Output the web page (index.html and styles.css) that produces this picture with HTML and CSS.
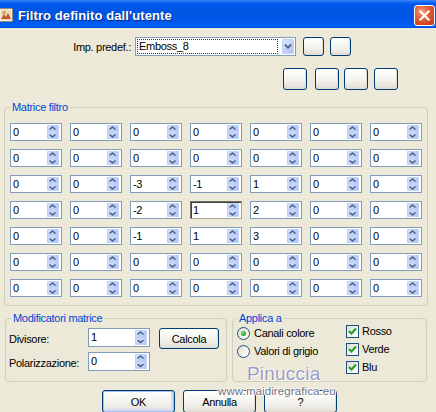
FILE: index.html
```html
<!DOCTYPE html>
<html>
<head>
<meta charset="utf-8">
<title>Filtro definito dall'utente</title>
<link rel="stylesheet" href="styles.css">
</head>
<body>
<div class="window">
  <div class="titlebar">
    <svg class="appicon" viewBox="0 0 16 16" width="16" height="16">
      <rect x="1.5" y="1.5" width="13" height="13" rx="1" fill="#F4EBD6" stroke="#9A8A6A"/>
      <rect x="3" y="3" width="10" height="10" fill="#E9D9B8"/>
      <path d="M3 12 L6 7 L8 10 L10 6 L13 12 Z" fill="#C4562E"/>
      <circle cx="6" cy="5.5" r="1.5" fill="#E88A4A"/>
    </svg>
    <span class="title">Filtro definito dall'utente</span>
    <span class="close">
      <svg viewBox="0 0 19 19" width="19" height="19">
        <path d="M5.5 5.5 L13.5 13.5 M13.5 5.5 L5.5 13.5" stroke="#fff" stroke-width="2.2" stroke-linecap="square"/>
      </svg>
    </span>
  </div>

  <div class="content">
    <div class="preset-row">
      <span class="preset-label">Imp. predef.:</span>
      <div class="combo">
        <span class="combo-text">Emboss_8</span>
        <span class="combo-btn"></span>
      </div>
      <span class="xpbtn sq"></span>
      <span class="xpbtn sq"></span>
    </div>

    <div class="tool-row">
      <span class="xpbtn tool"></span>
      <span class="xpbtn tool"></span>
      <span class="xpbtn tool"></span>
      <span class="xpbtn tool"></span>
    </div>

    <fieldset class="group matrix">
      <legend>Matrice filtro</legend>
      <div class="grid">
        <div class="spin"><span class="v">0</span><span class="arr"><i class="u"></i><i class="d"></i></span></div>
        <div class="spin"><span class="v">0</span><span class="arr"><i class="u"></i><i class="d"></i></span></div>
        <div class="spin"><span class="v">0</span><span class="arr"><i class="u"></i><i class="d"></i></span></div>
        <div class="spin"><span class="v">0</span><span class="arr"><i class="u"></i><i class="d"></i></span></div>
        <div class="spin"><span class="v">0</span><span class="arr"><i class="u"></i><i class="d"></i></span></div>
        <div class="spin"><span class="v">0</span><span class="arr"><i class="u"></i><i class="d"></i></span></div>
        <div class="spin"><span class="v">0</span><span class="arr"><i class="u"></i><i class="d"></i></span></div>

        <div class="spin"><span class="v">0</span><span class="arr"><i class="u"></i><i class="d"></i></span></div>
        <div class="spin"><span class="v">0</span><span class="arr"><i class="u"></i><i class="d"></i></span></div>
        <div class="spin"><span class="v">0</span><span class="arr"><i class="u"></i><i class="d"></i></span></div>
        <div class="spin"><span class="v">0</span><span class="arr"><i class="u"></i><i class="d"></i></span></div>
        <div class="spin"><span class="v">0</span><span class="arr"><i class="u"></i><i class="d"></i></span></div>
        <div class="spin"><span class="v">0</span><span class="arr"><i class="u"></i><i class="d"></i></span></div>
        <div class="spin"><span class="v">0</span><span class="arr"><i class="u"></i><i class="d"></i></span></div>

        <div class="spin"><span class="v">0</span><span class="arr"><i class="u"></i><i class="d"></i></span></div>
        <div class="spin"><span class="v">0</span><span class="arr"><i class="u"></i><i class="d"></i></span></div>
        <div class="spin"><span class="v">-3</span><span class="arr"><i class="u"></i><i class="d"></i></span></div>
        <div class="spin"><span class="v">-1</span><span class="arr"><i class="u"></i><i class="d"></i></span></div>
        <div class="spin"><span class="v">1</span><span class="arr"><i class="u"></i><i class="d"></i></span></div>
        <div class="spin"><span class="v">0</span><span class="arr"><i class="u"></i><i class="d"></i></span></div>
        <div class="spin"><span class="v">0</span><span class="arr"><i class="u"></i><i class="d"></i></span></div>

        <div class="spin"><span class="v">0</span><span class="arr"><i class="u"></i><i class="d"></i></span></div>
        <div class="spin"><span class="v">0</span><span class="arr"><i class="u"></i><i class="d"></i></span></div>
        <div class="spin"><span class="v">-2</span><span class="arr"><i class="u"></i><i class="d"></i></span></div>
        <div class="spin focus"><span class="v">1</span><span class="arr"><i class="u"></i><i class="d"></i></span></div>
        <div class="spin"><span class="v">2</span><span class="arr"><i class="u"></i><i class="d"></i></span></div>
        <div class="spin"><span class="v">0</span><span class="arr"><i class="u"></i><i class="d"></i></span></div>
        <div class="spin"><span class="v">0</span><span class="arr"><i class="u"></i><i class="d"></i></span></div>

        <div class="spin"><span class="v">0</span><span class="arr"><i class="u"></i><i class="d"></i></span></div>
        <div class="spin"><span class="v">0</span><span class="arr"><i class="u"></i><i class="d"></i></span></div>
        <div class="spin"><span class="v">-1</span><span class="arr"><i class="u"></i><i class="d"></i></span></div>
        <div class="spin"><span class="v">1</span><span class="arr"><i class="u"></i><i class="d"></i></span></div>
        <div class="spin"><span class="v">3</span><span class="arr"><i class="u"></i><i class="d"></i></span></div>
        <div class="spin"><span class="v">0</span><span class="arr"><i class="u"></i><i class="d"></i></span></div>
        <div class="spin"><span class="v">0</span><span class="arr"><i class="u"></i><i class="d"></i></span></div>

        <div class="spin"><span class="v">0</span><span class="arr"><i class="u"></i><i class="d"></i></span></div>
        <div class="spin"><span class="v">0</span><span class="arr"><i class="u"></i><i class="d"></i></span></div>
        <div class="spin"><span class="v">0</span><span class="arr"><i class="u"></i><i class="d"></i></span></div>
        <div class="spin"><span class="v">0</span><span class="arr"><i class="u"></i><i class="d"></i></span></div>
        <div class="spin"><span class="v">0</span><span class="arr"><i class="u"></i><i class="d"></i></span></div>
        <div class="spin"><span class="v">0</span><span class="arr"><i class="u"></i><i class="d"></i></span></div>
        <div class="spin"><span class="v">0</span><span class="arr"><i class="u"></i><i class="d"></i></span></div>

        <div class="spin"><span class="v">0</span><span class="arr"><i class="u"></i><i class="d"></i></span></div>
        <div class="spin"><span class="v">0</span><span class="arr"><i class="u"></i><i class="d"></i></span></div>
        <div class="spin"><span class="v">0</span><span class="arr"><i class="u"></i><i class="d"></i></span></div>
        <div class="spin"><span class="v">0</span><span class="arr"><i class="u"></i><i class="d"></i></span></div>
        <div class="spin"><span class="v">0</span><span class="arr"><i class="u"></i><i class="d"></i></span></div>
        <div class="spin"><span class="v">0</span><span class="arr"><i class="u"></i><i class="d"></i></span></div>
        <div class="spin"><span class="v">0</span><span class="arr"><i class="u"></i><i class="d"></i></span></div>
      </div>
    </fieldset>

    <div class="bottom-row">
      <fieldset class="group mods">
        <legend>Modificatori matrice</legend>
        <div class="mods-grid">
          <span class="lbl">Divisore:</span>
          <div class="spin tall"><span class="v">1</span><span class="arr"><i class="u"></i><i class="d"></i></span></div>
          <span class="xpbtn calc">Calcola</span>
          <span class="lbl">Polarizzazione:</span>
          <div class="spin tall"><span class="v">0</span><span class="arr"><i class="u"></i><i class="d"></i></span></div>
        </div>
      </fieldset>

      <fieldset class="group apply">
        <legend>Applica a</legend>
        <div class="apply-cols">
          <div class="radios">
            <div class="opt"><span class="radio on"></span><span>Canali colore</span></div>
            <div class="opt"><span class="radio"></span><span>Valori di grigio</span></div>
          </div>
          <div class="checks">
            <div class="opt"><span class="check"><svg viewBox="0 0 11 11" width="11" height="11"><path d="M2 5 L4.5 7.5 L9 2.5" fill="none" stroke="#21A121" stroke-width="2.2"/></svg></span><span>Rosso</span></div>
            <div class="opt"><span class="check"><svg viewBox="0 0 11 11" width="11" height="11"><path d="M2 5 L4.5 7.5 L9 2.5" fill="none" stroke="#21A121" stroke-width="2.2"/></svg></span><span>Verde</span></div>
            <div class="opt"><span class="check"><svg viewBox="0 0 11 11" width="11" height="11"><path d="M2 5 L4.5 7.5 L9 2.5" fill="none" stroke="#21A121" stroke-width="2.2"/></svg></span><span>Blu</span></div>
          </div>
        </div>
      </fieldset>
    </div>

    <div class="actions">
      <span class="xpbtn act default">OK</span>
      <span class="xpbtn act">Annulla</span>
      <span class="xpbtn act">?</span>
    </div>
  </div>

  <div class="wm-name">Pinuccia</div>
  <div class="wm-url">www.maidiregrafica.eu</div>
</div>
</body>
</html>
```

FILE: styles.css
```css
* { box-sizing: border-box; }

html, body {
  margin: 0;
  padding: 0;
}

body {
  background: #ECE9D8;
  font-family: "Liberation Sans", Arial, sans-serif;
  font-size: 11px;
  letter-spacing: -0.3px;
  color: #000;
}

.window {
  position: relative;
  width: 436px;
  height: 412px;
  overflow: hidden;
  background: #ECE9D8;
}

/* ---------- title bar ---------- */
.titlebar {
  height: 28px;
  padding-top: 2px;
  display: flex;
  align-items: center;
  background: linear-gradient(180deg,
    #3B8CF6 0%, #1A6EF5 6%, #0058EC 14%, #0054E3 40%,
    #0055E6 70%, #005CF0 86%, #0062F6 93%, #0048D8 100%);
}

.appicon {
  flex: none;
  margin-left: -2px;
  margin-right: 4px;
}

.title {
  color: #fff;
  font-weight: bold;
  font-size: 13px;
  letter-spacing: 0.1px;
  text-shadow: 1px 1px 0 #0A2A80;
}

.close {
  margin-left: auto;
  margin-right: 1px;
  align-self: flex-start;
  margin-top: 3px;
  width: 21px;
  height: 21px;
  border: 1px solid #fff;
  border-radius: 3px;
  background: radial-gradient(circle at 35% 30%, #F2A080 0%, #E3653E 35%, #D24A22 70%, #B8391A 100%);
  display: flex;
  align-items: center;
  justify-content: center;
}

/* ---------- content ---------- */
.content {
  padding: 9px 8px 0 4px;
}

.preset-row {
  display: flex;
  align-items: center;
  height: 19px;
}

.preset-label {
  width: 127px;
  text-align: right;
  margin-right: 4px;
}

.combo {
  width: 161px;
  height: 19px;
  border: 1px solid #7F9DB9;
  background: #fff;
  padding: 1px;
  display: flex;
  margin-right: 7px;
}

.combo-text {
  flex: 1;
  border: 1px dotted #333;
  line-height: 13px;
  padding-left: 1px;
  margin-right: 4px;
}

.combo-btn {
  width: 12px;
  position: relative;
  border-radius: 2px;
  background: linear-gradient(135deg, #E2EAFE 0%, #C2D3FA 50%, #AEC3F3 100%);
  box-shadow: inset 0 0 0 1px #BFD0F8;
}

.combo-btn::before {
  content: "";
  position: absolute;
  left: 2px;
  top: 5px;
  width: 8px;
  height: 5px;
  background: #4D6185;
  clip-path: polygon(0 20%, 20% 0, 50% 50%, 80% 0, 100% 20%, 50% 100%);
}

.xpbtn {
  display: flex;
  align-items: center;
  justify-content: center;
  border: 1px solid #003C74;
  border-radius: 3px;
  background: linear-gradient(180deg, #FFFFFF 0%, #F8F8F5 30%, #F1F0EB 60%, #E6E4DC 88%, #D8D3C8 100%);
  box-shadow: inset -1px -1px 0 #E0DCD0;
  color: #000;
}

.sq {
  width: 21px;
  height: 19px;
}

.sq + .sq {
  margin-left: 6px;
}

.tool-row {
  display: flex;
  margin-top: 12px;
  padding-left: 279px;
}

.tool {
  width: 24px;
  height: 22px;
}

.tool:nth-child(1) { margin-right: 8px; }
.tool:nth-child(2) { margin-right: 5px; }
.tool:nth-child(3) { margin-right: 6px; }

/* ---------- group boxes ---------- */
.group {
  margin: 0;
  border: 1px solid #D0D0BF;
  border-radius: 4px;
  min-width: 0;
}

.group legend {
  padding: 0 2px;
  line-height: 13px;
  color: #0046D5;
}

.matrix {
  margin-top: 11px;
  width: 424px;
  padding: 9px 5px 8px 5px;
}

.grid {
  display: grid;
  grid-template-columns: repeat(7, 52px);
  grid-auto-rows: 18px;
  gap: 8px;
}

/* ---------- spin boxes ---------- */
.spin {
  display: flex;
  height: 18px;
  border: 1px solid #7F9DB9;
  background: #fff;
}

.spin .v {
  flex: 1;
  padding-left: 2px;
  line-height: 16px;
}

.arr {
  display: flex;
  flex-direction: column;
  width: 12px;
  margin: 1px 2px 1px 0;
}

.arr i {
  flex: 1;
  position: relative;
  border-radius: 1px;
  background: linear-gradient(135deg, #DDE7FD 0%, #C0D1F9 50%, #ADC2F2 100%);
  box-shadow: inset 0 0 0 1px #C2D2F8;
}

.arr i::before {
  content: "";
  position: absolute;
  left: 2px;
  width: 7px;
  height: 4px;
  background: #4D6185;
}

.arr i.u::before {
  top: 1px;
  clip-path: polygon(50% 0, 100% 75%, 86% 100%, 50% 50%, 14% 100%, 0 75%);
}

.arr i.d::before {
  top: 2px;
  clip-path: polygon(0 25%, 14% 0, 50% 50%, 86% 0, 100% 25%, 50% 100%);
}

.spin.focus {
  border-color: #716F64 #A7A69C #A7A69C #716F64;
  box-shadow: inset 1px 1px 0 #404040;
}

.spin.tall {
  height: 19px;
}

.spin.tall .v {
  line-height: 17px;
}

/* ---------- bottom groups ---------- */
.bottom-row {
  display: flex;
  margin-top: 6px;
  padding-left: 1px;
  gap: 5px;
}

.mods {
  width: 222px;
  height: 70px;
  padding: 3px 0 8px 3px;
}

.mods legend {
  margin-left: 2px;
}

.mods-grid {
  display: grid;
  grid-template-columns: 79px 62px 69px;
  grid-template-rows: 21px 21px;
  row-gap: 3px;
  align-items: center;
}

.mods-grid .spin {
  align-self: start;
}

.calc {
  height: 21px;
  margin-left: 9px;
}

.apply {
  width: 195px;
  height: 70px;
  padding: 0 0 0 4px;
}

.apply-cols {
  display: flex;
}

.radios {
  width: 109px;
  margin-top: -1px;
}

.checks {
  margin-top: -3px;
}

.opt {
  display: flex;
  align-items: center;
  height: 18px;
}

.radio {
  flex: none;
  position: relative;
  width: 13px;
  height: 13px;
  border: 1px solid #1C5180;
  border-radius: 50%;
  background: linear-gradient(135deg, #DCDAD0 0%, #F4F3EE 60%, #FFFFFF 100%);
  margin-right: 4px;
}

.radio.on::after {
  content: "";
  position: absolute;
  left: 3px;
  top: 3px;
  width: 5px;
  height: 5px;
  border-radius: 50%;
  background: radial-gradient(circle at 35% 35%, #7EE07E 0%, #2FB42F 50%, #1A8E1A 100%);
}

.check {
  flex: none;
  display: flex;
  width: 13px;
  height: 13px;
  border: 1px solid #1C5180;
  background: linear-gradient(135deg, #DCDAD0 0%, #F4F3EE 60%, #FFFFFF 100%);
  margin-right: 3px;
}

/* ---------- action buttons ---------- */
.actions {
  display: flex;
  gap: 8px;
  margin-top: 8px;
  padding-left: 98px;
}

.act {
  width: 73px;
  height: 23px;
}

.act.default {
  box-shadow: inset 0 0 0 1px #A9C0EC, inset -1px -1px 0 2px #D2DDF3;
}

/* ---------- watermark ---------- */
.wm-name {
  position: absolute;
  left: 247px;
  top: 363px;
  font-size: 19px;
  line-height: 22px;
  letter-spacing: 0.2px;
  color: #9B9CC2;
  text-shadow: 0 0 2px #fff, 1px 1px 0 #fff;
}

.wm-url {
  position: absolute;
  left: 218px;
  top: 384px;
  font-size: 11.5px;
  line-height: 14px;
  letter-spacing: 0.1px;
  color: #72727E;
  text-shadow: 0 0 1px #fff, 1px 0 0 #fff, -1px 0 0 #fff, 0 1px 0 #fff, 0 -1px 0 #fff;
}
```
